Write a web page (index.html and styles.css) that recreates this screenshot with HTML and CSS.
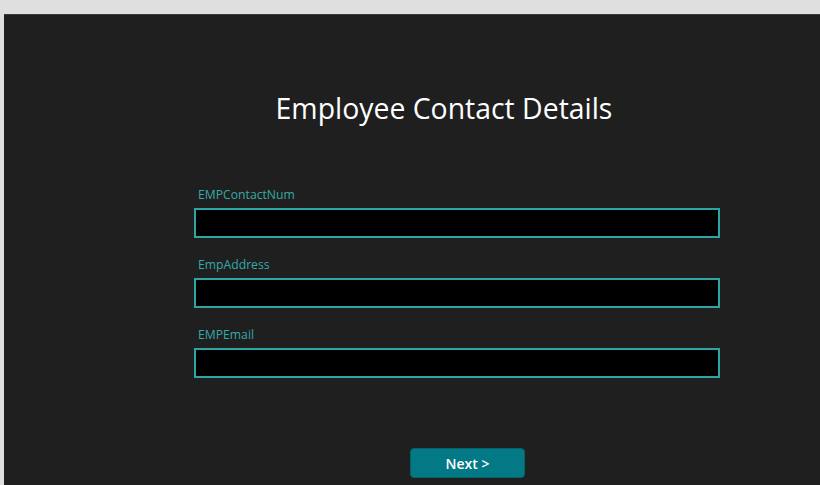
FILE: index.html
```html
<!DOCTYPE html>
<html lang="en">
<head>
  <meta charset="UTF-8">
  <title>Employee Contact Details</title>
  <link rel="stylesheet" href="styles.css">
</head>
<body>
  <div class="screen">
    <h1 class="screen__title">Employee Contact Details</h1>
    <form class="form">
      <div class="field">
        <label class="field__label" for="contact">EMPContactNum</label>
        <input class="field__input" id="contact" type="text">
      </div>
      <div class="field">
        <label class="field__label" for="address">EmpAddress</label>
        <input class="field__input" id="address" type="text">
      </div>
      <div class="field">
        <label class="field__label" for="email">EMPEmail</label>
        <input class="field__input" id="email" type="text">
      </div>
      <div class="form__actions">
        <button class="btn-next" type="button">Next &gt;</button>
      </div>
    </form>
  </div>
</body>
</html>
```

FILE: styles.css
```css
html, body {
  margin: 0;
  height: 100%;
}

body {
  background-color: #dfdfdf;
  font-family: "Open Sans", "Noto Sans", sans-serif;
  overflow: hidden;
}

.screen {
  margin: 14px 0 0 4px;
  height: 471px;
  background-color: #1f1f1f;
  border-top: 1px solid #3a3a3a;
  box-sizing: border-box;
  padding-top: 75px;
}

.screen__title {
  margin: 0;
  padding-left: 64px;
  text-align: center;
  color: #fff;
  font-size: 28.4px;
  font-weight: 400;
  line-height: 36px;
}

.form {
  margin: 61px 0 0 190px;
  width: 526px;
}

.field {
  display: flex;
  flex-direction: column;
  margin-bottom: 19px;
}

.field__label {
  color: #36aaa8;
  font-size: 12.2px;
  line-height: 16px;
  padding-left: 4px;
  margin-bottom: 5px;
}

.field__input {
  height: 30px;
  box-sizing: border-box;
  background-color: #000;
  border: 2px solid #2aa6a4;
  color: #fff;
  outline: none;
}

.form__actions {
  display: flex;
  padding-left: 216px;
  margin-top: 70px;
}

.btn-next {
  width: 115px;
  height: 30px;
  background-color: #027985;
  border: 1px solid #02636d;
  border-radius: 4px;
  color: #fff;
  font-family: "Open Sans", sans-serif;
  font-size: 14px;
  font-weight: 600;
}
```
